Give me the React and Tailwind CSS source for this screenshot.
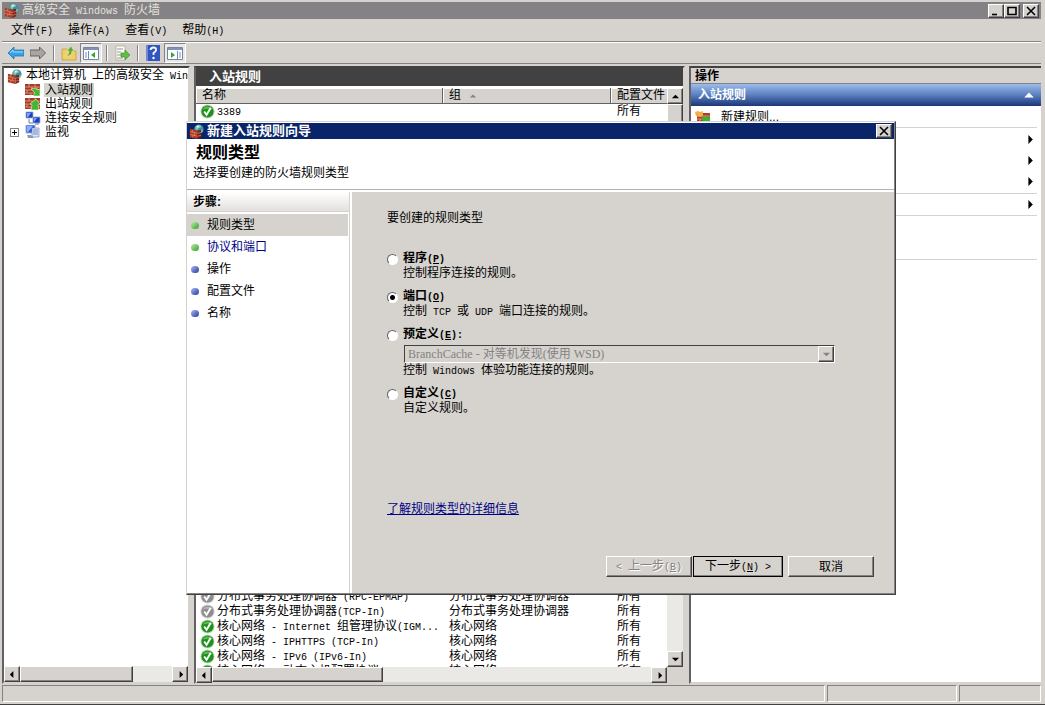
import { useState } from 'react';

const tree = [
  { label: '入站规则', icon: 'inbound', selected: true },
  { label: '出站规则', icon: 'outbound' },
  { label: '连接安全规则', icon: 'link' },
  { label: '监视', icon: 'monitor', expandable: true },
];

const rules = [
  { name: '分布式事务处理协调器 (RPC-EPMAP)', group: '分布式事务处理协调器', enabled: false },
  { name: '分布式事务处理协调器(TCP-In)', group: '分布式事务处理协调器', enabled: false },
  { name: '核心网络 - Internet 组管理协议(IGM...', group: '核心网络', enabled: true },
  { name: '核心网络 - IPHTTPS (TCP-In)', group: '核心网络', enabled: true },
  { name: '核心网络 - IPv6 (IPv6-In)', group: '核心网络', enabled: true },
  { name: '核心网络 - 动态主机配置协议(DHCP-In)', group: '核心网络', enabled: true },
];

const steps = [
  { label: '规则类型', dot: 'green', current: true },
  { label: '协议和端口', dot: 'green', link: true },
  { label: '操作', dot: 'blue' },
  { label: '配置文件', dot: 'blue' },
  { label: '名称', dot: 'blue' },
];

const ruleTypes = [
  { id: 'program', label: '程序', hotkey: 'P', text: '控制程序连接的规则。' },
  { id: 'port', label: '端口', hotkey: 'O', text: '控制 TCP 或 UDP 端口连接的规则。' },
  { id: 'predefined', label: '预定义', hotkey: 'E', tail: ':', text: '控制 Windows 体验功能连接的规则。' },
  { id: 'custom', label: '自定义', hotkey: 'C', text: '自定义规则。' },
];

const raised =
  'bg-[#d6d3ce] border border-t-white border-l-white border-r-[#424142] border-b-[#424142] shadow-[inset_-1px_-1px_0_#848284]';

// Latin runs are set at half the width of a Chinese character
const Text = ({ children }) => (
  <span className="whitespace-pre">
    {children.split(/([\x20-\x7e]+)/).map((part, i) =>
      i % 2 ? (
        <span key={i} className="font-['Liberation_Mono',monospace] text-[10px]">{part}</span>
      ) : (
        part
      )
    )}
  </span>
);

const Hotkey = ({ label, hotkey, tail = '', underline = true }) => (
  <span className="whitespace-pre">
    {label}
    <span className="font-['Liberation_Mono',monospace] text-[10px]">
      (<span className={underline ? 'underline' : ''}>{hotkey}</span>){tail}
    </span>
  </span>
);

const FirewallIcon = () => (
  <svg viewBox="0 0 16 16" className="h-[15px] w-[15px] shrink-0" aria-hidden="true">
    <circle cx="10.5" cy="5.5" r="5" fill="#3a8fb7" />
    <path d="M7 3q2-2.500 5-1.500l1 2-3 1-1 2-2-1zM12 7l3-1-1 3-2 1z" fill="#8fd19a" />
    <path d="M8 2q2-1 3 0l-2 2z" fill="#e6f7ff" />
    <path d="M1 5l8 2v9l-8-2z" fill="#b23a22" />
    <path d="M9 7l4-1v8l-4 2z" fill="#7c2415" />
    <path d="M1 8l8 2 4-1M1 11l8 2 4-1M4 6v3M6 9.500v3M4 11.500v3" stroke="#e8a08c" strokeWidth=".6" fill="none" />
  </svg>
);

const WallIcon = ({ out }) => (
  <svg viewBox="0 0 16 14" className="h-[14px] w-4 shrink-0" aria-hidden="true">
    <path d="M0 1h15v11H0z" fill="#a83a24" />
    <path d="M0 4h15M0 7h15M0 10h15M4 1v3M10 1v3M7 4v3M2 7v3M6 10v2M12 4v3" stroke="#e3a591" strokeWidth=".8" />
    {out ? (
      <path d="M6 13l1-5-2-1 6-5 4 5-2 1 1 5z" fill="#45b52d" stroke="#e5f5d8" strokeWidth=".6" />
    ) : (
      <path d="M6 6l5-1 1 2 3-1v7H8l2-3z" fill="#45b52d" stroke="#e5f5d8" strokeWidth=".6" />
    )}
  </svg>
);

const LinkIcon = () => (
  <svg viewBox="0 0 16 14" className="h-[14px] w-4 shrink-0" aria-hidden="true">
    <path d="M1 1h7v6H1zM8 6h7v6H8z" fill="#1c3fc4" stroke="#9aa7cc" strokeWidth=".8" />
    <path d="M2 2h4L3 6H2zM9 7h3l-3 4z" fill="#7da6ff" />
    <path d="M4 8v4h4M10 13h4" stroke="#6b7d9c" fill="none" />
  </svg>
);

const MonitorIcon = () => (
  <svg viewBox="0 0 16 14" className="h-[14px] w-4 shrink-0" aria-hidden="true">
    <path d="M1 0h9v8H1z" fill="#2c56d0" stroke="#9fb0d8" />
    <path d="M2 1h6L3 7H2z" fill="#88b0ff" />
    <path d="M7 3h7v9H7z" fill="#dfe6f3" stroke="#7489b5" strokeWidth=".7" />
    <path d="M8 5h5M8 7h5M8 9h5" stroke="#4b76c9" strokeWidth=".8" />
    <path d="M2 10h4l3 3H3z" fill="#8b99b5" />
  </svg>
);

const NewRuleIcon = () => (
  <svg viewBox="0 0 16 14" className="h-[14px] w-4 shrink-0" aria-hidden="true">
    <path d="M2 3h13v10H2z" fill="#b23c24" />
    <path d="M2 6h13M2 9h13M6 3v3M10 6v3M5 9v3" stroke="#e8ad9b" strokeWidth=".8" />
    <path d="M7 7l6-1 2 2v5H8z" fill="#43b02c" />
    <path d="M0 2l3-1 2 1 3-1v5l-3 1-4-1z" fill="#eeb04c" />
  </svg>
);

const StatusIcon = ({ enabled }) => (
  <svg viewBox="0 0 16 16" className="h-[15px] w-[15px] shrink-0" aria-hidden="true">
    <circle cx="8" cy="8" r="7.500" fill={enabled ? '#b9d8b4' : '#d0cdd0'} />
    <circle cx="8" cy="8" r="6.500" fill={enabled ? '#1f8f1f' : '#8f8c90'} />
    <path d="M3 6a5.500 5.500 0 0 1 10 0q-5-2-10 0z" fill={enabled ? '#5dbb4e' : '#b5b2b6'} />
    <path d="M4.500 8l2.500 3.500L11.500 4" fill="none" stroke="#fff" strokeWidth="2" />
  </svg>
);

const treeIcons = {
  inbound: <WallIcon />,
  outbound: <WallIcon out />,
  link: <LinkIcon />,
  monitor: <MonitorIcon />,
};

const arrows = {
  left: 'M6 1v8L2 5z',
  right: 'M4 1v8l4-4z',
  up: 'M1 7h8L5 3z',
  down: 'M1 3h8L5 7z',
};

const Arrow = ({ dir, className = 'h-[9px] w-[9px]' }) => (
  <svg viewBox="0 0 10 10" className={className} fill="currentColor" aria-hidden="true">
    <path d={arrows[dir]} />
  </svg>
);

const ScrollButton = ({ dir, label }) => (
  <button type="button" aria-label={label} className={`flex h-4 w-4 shrink-0 items-center justify-center ${raised}`}>
    <Arrow dir={dir} />
  </button>
);

const WindowButton = ({ label, children }) => (
  <button type="button" aria-label={label} className={`flex h-[14px] w-4 items-center justify-center ${raised}`}>
    <svg viewBox="0 0 10 10" className="h-[10px] w-[10px]" fill="none" stroke="#000" strokeWidth="1.600" aria-hidden="true">
      {children}
    </svg>
  </button>
);

const Separator = () => <div className="mx-1 h-4 w-px bg-[#848284] shadow-[1px_0_0_#fff]" />;

const ToolButton = ({ label, active, children }) => (
  <button
    type="button"
    aria-label={label}
    className={`flex h-5 w-[22px] items-center justify-center ${active ? 'border border-t-[#848284] border-l-[#848284] border-r-white border-b-white bg-[#ebe9e6]' : ''}`}
  >
    <svg viewBox="0 0 16 16" className="h-4 w-4 shrink-0" aria-hidden="true">{children}</svg>
  </button>
);

const Toolbar = () => (
  <div className="flex h-[22px] shrink-0 items-center border-b border-[#848284] pl-[3px]">
    <ToolButton label="后退">
      <path d="M0 8l6-6v3h10v6H6v3z" fill="#38a3e4" stroke="#2274b4" strokeWidth=".8" />
      <path d="M2 8l3-3v2h10" stroke="#a2dcfa" fill="none" />
    </ToolButton>
    <ToolButton label="前进">
      <path d="M15.500 8l-6-6v3H0v6h9.500v3z" fill="#a8a6a4" stroke="#5c5a58" strokeWidth=".9" />
    </ToolButton>
    <Separator />
    <ToolButton label="向上一级">
      <path d="M1 4h5l1 2h8v9H1z" fill="#f1cf67" stroke="#c79d35" strokeWidth=".8" />
      <path d="M4 11q4 0 4-5H6l4-5 3 5h-2q0 6-7 5z" fill="#56ad36" stroke="#f3efc5" strokeWidth=".5" />
    </ToolButton>
    <ToolButton label="显示/隐藏控制台树" active>
      <path d="M.5 2.500h15v12H.5z" fill="#fff" stroke="#7385a5" />
      <path d="M1 3h14v2H1z" fill="#8192b6" />
      <path d="M5.500 6v8M2 8h2M2 10h2M2 12h2" stroke="#758bb4" />
      <path d="M12 7v6L8 10z" fill="#36a333" />
    </ToolButton>
    <Separator />
    <ToolButton label="导出列表">
      <path d="M2 1h9v14H2z" fill="#fffef2" stroke="#aaa48e" strokeWidth=".7" />
      <path d="M3 4h6M3 7h4M3 10h4M3 13h6" stroke="#8793a8" />
      <path d="M7 8h4V5l5 5-5 5v-3H7z" fill="#5fbe43" stroke="#348b28" strokeWidth=".6" />
    </ToolButton>
    <Separator />
    <ToolButton label="帮助">
      <path d="M1 0h14v16H1z" fill="#3355be" />
      <path d="M1 0h2v16H1z" fill="#7088d6" />
      <path d="M5.500 5q0-2.500 3-2.500T11 5q0 1.500-2.500 3v2" fill="none" stroke="#fff" strokeWidth="1.800" />
      <circle cx="8.500" cy="13" r="1.200" fill="#fff" />
    </ToolButton>
    <ToolButton label="显示/隐藏操作窗格" active>
      <path d="M.5 2.500h15v12H.5z" fill="#fff" stroke="#7385a5" />
      <path d="M1 3h14v2H1z" fill="#8192b6" />
      <path d="M10.500 6v8M12 8h2M12 10h2M12 12h2" stroke="#758bb4" />
      <path d="M4 7v6l4-3z" fill="#36a333" />
    </ToolButton>
  </div>
);

const track = 'bg-[#ebe9e6]';
const pane = 'border-2 border-t-[#424142] border-l-[#636163] border-r-[#d6d3ce] border-b-[#d6d3ce]';

const TreePane = () => (
  <nav className={`flex w-[188px] shrink-0 flex-col overflow-hidden bg-white ${pane}`}>
    <div className="flex-1 overflow-hidden pt-px leading-[14px]">
      <div className="flex h-[14px] items-center gap-1 pl-[3px]">
        <FirewallIcon />
        <Text>本地计算机 上的高级安全 Windows</Text>
      </div>
      <ul>
        {tree.map((item) => (
          <li key={item.label} className="flex h-[14px] items-center">
            <span className="flex w-[21px] shrink-0 pl-[6px]">
              {item.expandable && (
                <button type="button" aria-label="展开" className="flex h-[9px] w-[9px] items-center justify-center border border-[#848284]">
                  <svg viewBox="0 0 5 5" className="h-[5px] w-[5px] shrink-0" stroke="#000" aria-hidden="true">
                    <path d="M0 2.500h5M2.500 0v5" />
                  </svg>
                </button>
              )}
            </span>
            {treeIcons[item.icon]}
            <span className={`ml-[3px] px-px ${item.selected ? 'bg-[#d6d3ce]' : ''}`}>{item.label}</span>
          </li>
        ))}
      </ul>
    </div>
    <div className={`flex h-4 shrink-0 ${track}`}>
      <ScrollButton dir="left" label="向左滚动" />
      <div className={`w-[113px] ${raised}`} />
      <div className="flex-1" />
      <ScrollButton dir="right" label="向右滚动" />
    </div>
  </nav>
);

const RuleRow = ({ name, group, enabled }) => (
  <tr className="h-[15px]">
    <td className="pl-1">
      <div className="flex h-[15px] items-center gap-[2px]">
        <StatusIcon enabled={enabled} />
        <Text>{name}</Text>
      </div>
    </td>
    <td className="pl-[6px]">{group}</td>
    <td className="pl-[6px]">所有</td>
  </tr>
);

const RulesPane = () => {
  const th = 'h-[15px] border-r border-b border-[#636163] bg-[#d6d3ce] pl-[6px] text-left font-normal shadow-[inset_1px_1px_0_#fff]';
  return (
    <section className={`flex w-[491px] shrink-0 flex-col ${pane} border-r-[#636163]`}>
      <h1 className="h-[19px] shrink-0 border-b border-white bg-[#424142] pl-[13px] text-[13px] leading-[18px] font-bold text-white">入站规则</h1>
      <div className="flex min-h-0 flex-1 bg-white pt-px">
        <div className="flex min-w-0 flex-1 flex-col">
          <div className="min-h-0 flex-1 overflow-hidden">
            <table className="w-full table-fixed border-separate border-spacing-0 leading-[15px]">
              <thead>
                <tr>
                  <th className={`w-[247px] ${th}`}>名称</th>
                  <th className={`w-[168px] ${th}`}>
                    <span className="flex items-center gap-2">
                      组 <Arrow dir="up" className="h-2 w-2 text-[#848284]" />
                    </span>
                  </th>
                  <th className={`${th} border-r-0`}>配置文件</th>
                </tr>
              </thead>
              <tbody>
                <RuleRow name="3389" group="" enabled />
                <tr className="h-[470px]"><td colSpan="3" /></tr>
                {rules.map((rule) => (
                  <RuleRow key={rule.name} {...rule} />
                ))}
              </tbody>
            </table>
          </div>
          <div className={`flex h-[15px] shrink-0 ${track}`}>
            <ScrollButton dir="left" label="向左滚动" />
            <div className={`w-[171px] ${raised}`} />
            <div className="flex-1" />
            <ScrollButton dir="right" label="向右滚动" />
          </div>
        </div>
        <div className={`flex w-4 shrink-0 flex-col ${track}`}>
          <ScrollButton dir="up" label="向上滚动" />
          <div className={`h-24 ${raised}`} />
          <div className="flex-1" />
          <ScrollButton dir="down" label="向下滚动" />
          <div className="h-[15px] bg-[#d6d3ce]" />
        </div>
      </div>
    </section>
  );
};

const ActionRow = ({ label }) => (
  <button type="button" aria-label={label} className="flex h-[21px] w-full items-center justify-end pr-[2px]">
    <Arrow dir="right" className="h-[11px] w-[11px]" />
  </button>
);

const ActionsPane = () => (
  <aside className={`min-w-0 flex-1 bg-white ${pane} border-r-0`}>
    <h2 className="h-4 border-b border-[#848284] bg-[#d6d3ce] pl-1 leading-4 font-bold">操作</h2>
    <div className="flex h-[22px] items-center justify-between bg-linear-to-b from-[#9cbcea] via-[#5b7fc0] to-[#1d3679] pr-[6px] pl-[7px] font-bold text-white">
      入站规则
      <Arrow dir="up" className="h-3 w-3" />
    </div>
    <div className="pr-1 pl-1">
      <button type="button" className="flex h-[22px] w-full items-center gap-[10px] border-b border-[#d6d3ce]">
        <NewRuleIcon />
        新建规则...
      </button>
      <div className="border-b border-[#d6d3ce] py-px">
        <ActionRow label="按配置文件筛选" />
        <ActionRow label="按状态筛选" />
        <ActionRow label="按组筛选" />
      </div>
      <div className="border-b border-[#d6d3ce]">
        <ActionRow label="查看" />
      </div>
      <div className="h-11 border-b border-[#d6d3ce]" />
    </div>
  </aside>
);

const Wizard = () => {
  const [type, setType] = useState('port');

  return (
    <div
      role="dialog"
      aria-labelledby="wizard-title"
      className="absolute top-[121px] left-[186px] flex h-[474px] w-[710px] flex-col border border-t-[#d6d3ce] border-l-[#d6d3ce] border-r-[#424142] border-b-[#424142] bg-white pt-px pr-px shadow-[inset_-1px_-1px_0_#848284]"
    >
      <div className="flex h-4 shrink-0 items-center gap-[3px] bg-[#0a246a] pr-[2px] pl-[2px] text-white">
        <FirewallIcon />
        <h2 id="wizard-title" className="flex-1 text-[13px] leading-4 font-bold">新建入站规则向导</h2>
        <WindowButton label="关闭">
          <path d="M1 1l8 8M9 1L1 9" />
        </WindowButton>
      </div>
      <div className="h-[51px] shrink-0 border-b border-[#b5b2ad] pl-[6px]">
        <h3 className="pt-[5px] pl-[3px] text-base leading-[18px] font-bold">规则类型</h3>
        <p className="pt-1 leading-[14px]">选择要创建的防火墙规则类型</p>
      </div>
      <div className="flex min-h-0 flex-1 pt-[2px] pb-px">
        <div className="w-[163px] shrink-0 border-r border-[#d6d3ce]">
          <h4 className="mb-[2px] h-5 border-b border-[#d6d3ce] bg-linear-to-b from-white to-[#e3e1de] pl-[6px] leading-5 font-bold">步骤:</h4>
          <ol>
            {steps.map((step) => (
              <li
                key={step.label}
                className={`mr-px flex h-[22px] items-center gap-2 pl-1 ${step.current ? 'bg-[#d6d3ce]' : ''}`}
              >
                <span
                  className={`h-[7px] w-2 rounded-full ${step.dot === 'green' ? 'bg-linear-to-br from-[#b7f0a4] to-[#2f9d2c]' : 'bg-linear-to-br from-[#aeb8f4] to-[#2c3a9e]'}`}
                />
                {step.link ? <a href="#protocol" className="text-[#000084]">{step.label}</a> : step.label}
              </li>
            ))}
          </ol>
        </div>
        <form className="ml-[2px] flex flex-1 flex-col bg-[#d6d3ce] pt-[19px] pr-5 pb-4 pl-[35px] leading-[14px]" onSubmit={(e) => e.preventDefault()}>
          <fieldset>
            <legend className="mb-[27px]">要创建的规则类型</legend>
            <div className="flex flex-col gap-[10px]">
              {ruleTypes.map((item) => (
                <div key={item.id} className="pl-4">
                  <label className="-ml-4 flex h-[14px] items-center gap-[5px] font-bold">
                    <input
                      type="radio"
                      name="rule-type"
                      value={item.id}
                      checked={type === item.id}
                      onChange={() => setType(item.id)}
                      className="h-[11px] w-[11px] shrink-0 appearance-none rounded-full border border-t-[#636163] border-l-[#636163] border-r-white border-b-white bg-white checked:bg-[radial-gradient(circle,#000_2px,#fff_3px)]"
                    />
                    <Hotkey label={item.label} hotkey={item.hotkey} tail={item.tail} />
                  </label>
                  {item.id === 'predefined' && (
                    <div className="relative mt-[3px] mr-[39px] ml-px">
                      <select
                        disabled
                        aria-label="预定义"
                        className="block h-[18px] w-full appearance-none border border-t-[#424142] border-l-[#424142] border-r-white border-b-white bg-[#d6d3ce] pl-[3px] font-['Liberation_Serif','Noto_Sans_CJK_SC',serif] text-[#848284] opacity-100"
                      >
                        <option>BranchCache - 对等机发现(使用 WSD)</option>
                      </select>
                      <span className={`pointer-events-none absolute top-px right-px flex h-4 w-4 items-center justify-center text-[#848284] ${raised}`}>
                        <Arrow dir="down" />
                      </span>
                    </div>
                  )}
                  <p className="h-[14px]"><Text>{item.text}</Text></p>
                </div>
              ))}
            </div>
          </fieldset>
          <a href="#details" className="mt-auto mb-10 self-start text-[#000084] underline">了解规则类型的详细信息</a>
          <div className="flex justify-end">
            <button type="button" disabled className={`h-[21px] w-[86px] text-[#848284] [text-shadow:1px_1px_0_#fff] ${raised}`}>
              <Text>{'< '}</Text><Hotkey label="上一步" hotkey="B" />
            </button>
            <button type="submit" className={`ml-px h-[21px] w-[90px] outline outline-black -outline-offset-1 ${raised}`}>
              <Hotkey label="下一步" hotkey="N" /><Text>{' >'}</Text>
            </button>
            <button type="button" className={`ml-[5px] h-[21px] w-[86px] ${raised}`}>取消</button>
          </div>
        </form>
      </div>
    </div>
  );
};

export default function App() {
  const status = 'h-[17px] border border-t-[#848284] border-l-[#848284] border-r-white border-b-white';
  return (
    <div className="relative flex h-screen flex-col overflow-hidden border-b border-[#424142] bg-[#d6d3ce] pt-[2px] pr-1 pl-[2px] font-['Liberation_Sans','Noto_Sans_CJK_SC',sans-serif] text-xs text-black">
      <header className="flex h-[17px] shrink-0 items-center gap-[3px] bg-[#848284] pr-[2px] pl-[2px] text-[#e3e1de]">
        <FirewallIcon />
        <span className="flex-1"><Text>高级安全 Windows 防火墙</Text></span>
        <div className="flex">
          <WindowButton label="最小化"><path d="M1 8.500h5" /></WindowButton>
          <WindowButton label="最大化"><path d="M1 1.500h8v7H1z" /></WindowButton>
        </div>
        <WindowButton label="关闭"><path d="M1 1l8 8M9 1L1 9" /></WindowButton>
      </header>
      <div className="flex h-[23px] shrink-0 items-center gap-[15px] border-b border-[#848284] pl-[9px] shadow-[0_1px_0_#fff]">
        <button type="button"><Hotkey label="文件" hotkey="F" underline={false} /></button>
        <button type="button"><Hotkey label="操作" hotkey="A" underline={false} /></button>
        <button type="button"><Hotkey label="查看" hotkey="V" underline={false} /></button>
        <button type="button"><Hotkey label="帮助" hotkey="H" underline={false} /></button>
      </div>
      <Toolbar />
      <main className="mt-[2px] flex min-h-0 flex-1 gap-1">
        <TreePane />
        <RulesPane />
        <ActionsPane />
      </main>
      <footer className="flex shrink-0 gap-[2px] pt-px pb-[2px]">
        <div className={`flex-1 ${status}`} />
        <div className={`w-[130px] ${status}`} />
        <div className={`w-[82px] ${status}`} />
      </footer>
      <Wizard />
    </div>
  );
}
